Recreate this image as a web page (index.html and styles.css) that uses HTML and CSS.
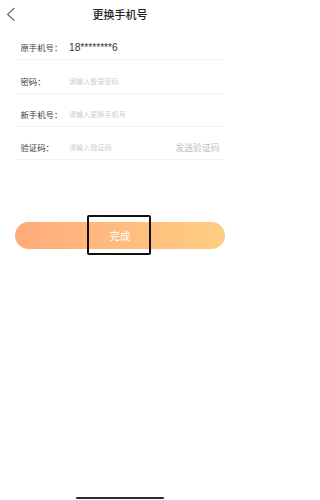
FILE: index.html
```html
<!DOCTYPE html>
<html lang="zh-CN">
<head>
<meta charset="utf-8">
<title>更换手机号</title>
<link rel="stylesheet" href="styles.css">
</head>
<body>
<div class="page">
  <header class="nav">
    <svg class="back" viewBox="0 0 30 27" width="30" height="27" aria-hidden="true">
      <polyline points="14,7.3 7.6,13.3 14,19.3" fill="none" stroke="#555" stroke-width="1.1" stroke-linecap="round" stroke-linejoin="round"/>
    </svg>
    <h1 class="title">更换手机号</h1>
    <span></span>
  </header>

  <div class="form">
    <div class="row">
      <span class="label">原手机号：</span>
      <span class="value">18********6</span>
    </div>
    <div class="row">
      <span class="label">密码：</span>
      <input class="field" type="password" placeholder="请输入登录密码">
    </div>
    <div class="row">
      <span class="label">新手机号：</span>
      <input class="field" type="text" placeholder="请输入更换手机号">
    </div>
    <div class="row">
      <span class="label">验证码：</span>
      <input class="field" type="text" placeholder="请输入验证码">
      <span class="send">发送验证码</span>
    </div>
  </div>

  <div class="action">
    <button class="done">完成</button>
    <span class="mark"></span>
  </div>

  <div class="home-bar"></div>
</div>
</body>
</html>
```

FILE: styles.css
```css
html, body {
  margin: 0;
  padding: 0;
  background: #fff;
}

body {
  font-family: "Noto Sans CJK SC", "Noto Sans", sans-serif;
  color: #333;
}

.page {
  width: 240px;
  height: 500px;
  display: flex;
  flex-direction: column;
}

.nav {
  height: 27px;
  display: grid;
  grid-template-columns: 30px 1fr 30px;
  align-items: center;
}

.back {
  display: block;
}

.title {
  margin: 0;
  text-align: center;
  font-size: 11px;
  line-height: 27px;
  font-weight: 500;
  color: #1f1f1f;
  padding-top: 1px;
}

.form {
  display: flex;
  flex-direction: column;
}

.row {
  height: 33.25px;
  box-sizing: border-box;
  margin: 0 16px;
  padding: 8.5px 4.5px 0 4.5px;
  border-bottom: 1px solid #f3f3f3;
  display: flex;
  align-items: center;
}

.label {
  width: 48.5px;
  flex: none;
  font-size: 8.4px;
  color: #3c3c3c;
  white-space: nowrap;
}

.value {
  font-family: "Liberation Sans", sans-serif;
  font-size: 10.2px;
  color: #333;
}

.field {
  flex: 1;
  min-width: 0;
  border: 0;
  outline: 0;
  padding: 0;
  margin: 0;
  background: transparent;
  font-family: "Noto Sans CJK SC", sans-serif;
  font-size: 7.1px;
  color: #333;
}

.field::placeholder {
  color: #cdcdcd;
}

.send {
  flex: none;
  font-size: 8.8px;
  color: #bdbdbd;
}

.action {
  position: relative;
  margin: 61.5px 15px 0;
}

.done {
  display: block;
  width: 100%;
  height: 27px;
  border: 0;
  border-radius: 13.5px;
  background: linear-gradient(to right, #ffab7b, #ffcd82);
  color: #fff;
  font-family: "Noto Sans CJK SC", sans-serif;
  font-size: 10.5px;
  padding: 0;
}

.mark {
  position: absolute;
  left: 72.3px;
  top: -6.5px;
  width: 63.5px;
  height: 40px;
  box-sizing: border-box;
  border: 2px solid #111;
  border-radius: 2px;
}

.home-bar {
  margin: auto auto 0.7px;
  width: 88px;
  height: 2px;
  border-radius: 1px;
  background: #2a2a2a;
}
```
